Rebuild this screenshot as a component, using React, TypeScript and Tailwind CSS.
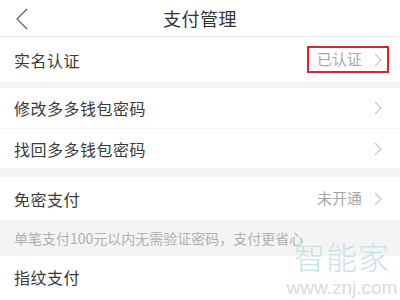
import React from "react";

const Chevron = () => (
  <svg width="8" height="14" viewBox="0 0 8 14" className="text-[#c8c8c8]">
    <path d="M1 1l6 6-6 6" fill="none" stroke="currentColor" strokeWidth="1.2" />
  </svg>
);

const Row = ({
  label,
  value,
  className,
}: {
  label: string;
  value?: string;
  className: string;
}) => (
  <div className={`flex items-center justify-between pl-[14px] pr-[18px] ${className}`}>
    <span className="text-[16px] tracking-[0.5px] text-[#3a3a3a]">{label}</span>
    <div className="flex items-center gap-[12px]">
      {value && <span className="text-[15px] text-[#a6a6a6]">{value}</span>}
      <Chevron />
    </div>
  </div>
);

const App = () => {
  return (
    <div
      className="relative w-[400px] h-[300px] overflow-hidden bg-white"
      style={{ fontFamily: '"Noto Sans CJK SC", "Noto Sans", sans-serif' }}
    >
      <header className="relative flex h-[37px] items-center justify-center border-b border-[#ececec]">
        <svg width="14" height="22" viewBox="0 0 14 22" className="absolute left-[15px] top-[8px] text-[#555]">
          <path d="M12 1L2 11l10 10" fill="none" stroke="currentColor" strokeWidth="1.1" />
        </svg>
        <h1 className="text-[18px] tracking-[0.5px] text-[#333]">支付管理</h1>
      </header>

      <div className="relative">
        <Row label="实名认证" value="已认证" className="h-[45px]" />
        <div className="absolute left-[307px] top-[9px] h-[27px] w-[82px] border-2 border-[#d8262d]" />
      </div>
      <div className="h-[6px] bg-[#f3f3f3]" />

      <Row label="修改多多钱包密码" className="h-[41px] border-b border-[#f0f0f0]" />
      <Row label="找回多多钱包密码" className="h-[39px]" />
      <div className="h-[9px] bg-[#f3f3f3]" />

      <Row label="免密支付" value="未开通" className="h-[43px]" />
      <div className="flex h-[36px] items-center bg-[#f4f4f4] pl-[14px]">
        <span className="text-[14px] text-[#b0b0b0]">单笔支付100元以内无需验证密码，支付更省心</span>
      </div>

      <div className="flex h-[42px] items-center pl-[14px]">
        <span className="text-[16px] tracking-[0.5px] text-[#3a3a3a]">指纹支付</span>
      </div>

      <div className="pointer-events-none absolute left-[292px] top-[233px] flex w-[100px] flex-col items-center">
        <span className="text-[31px] font-light leading-[45px] tracking-[1px] text-[#c9e2e5]">智能家</span>
        <span
          className="text-[19px] leading-[20px] text-[#cfdfe2]"
          style={{ fontFamily: '"Liberation Sans", sans-serif' }}
        >
          www.znj.com
        </span>
      </div>
    </div>
  );
};

export default App;
